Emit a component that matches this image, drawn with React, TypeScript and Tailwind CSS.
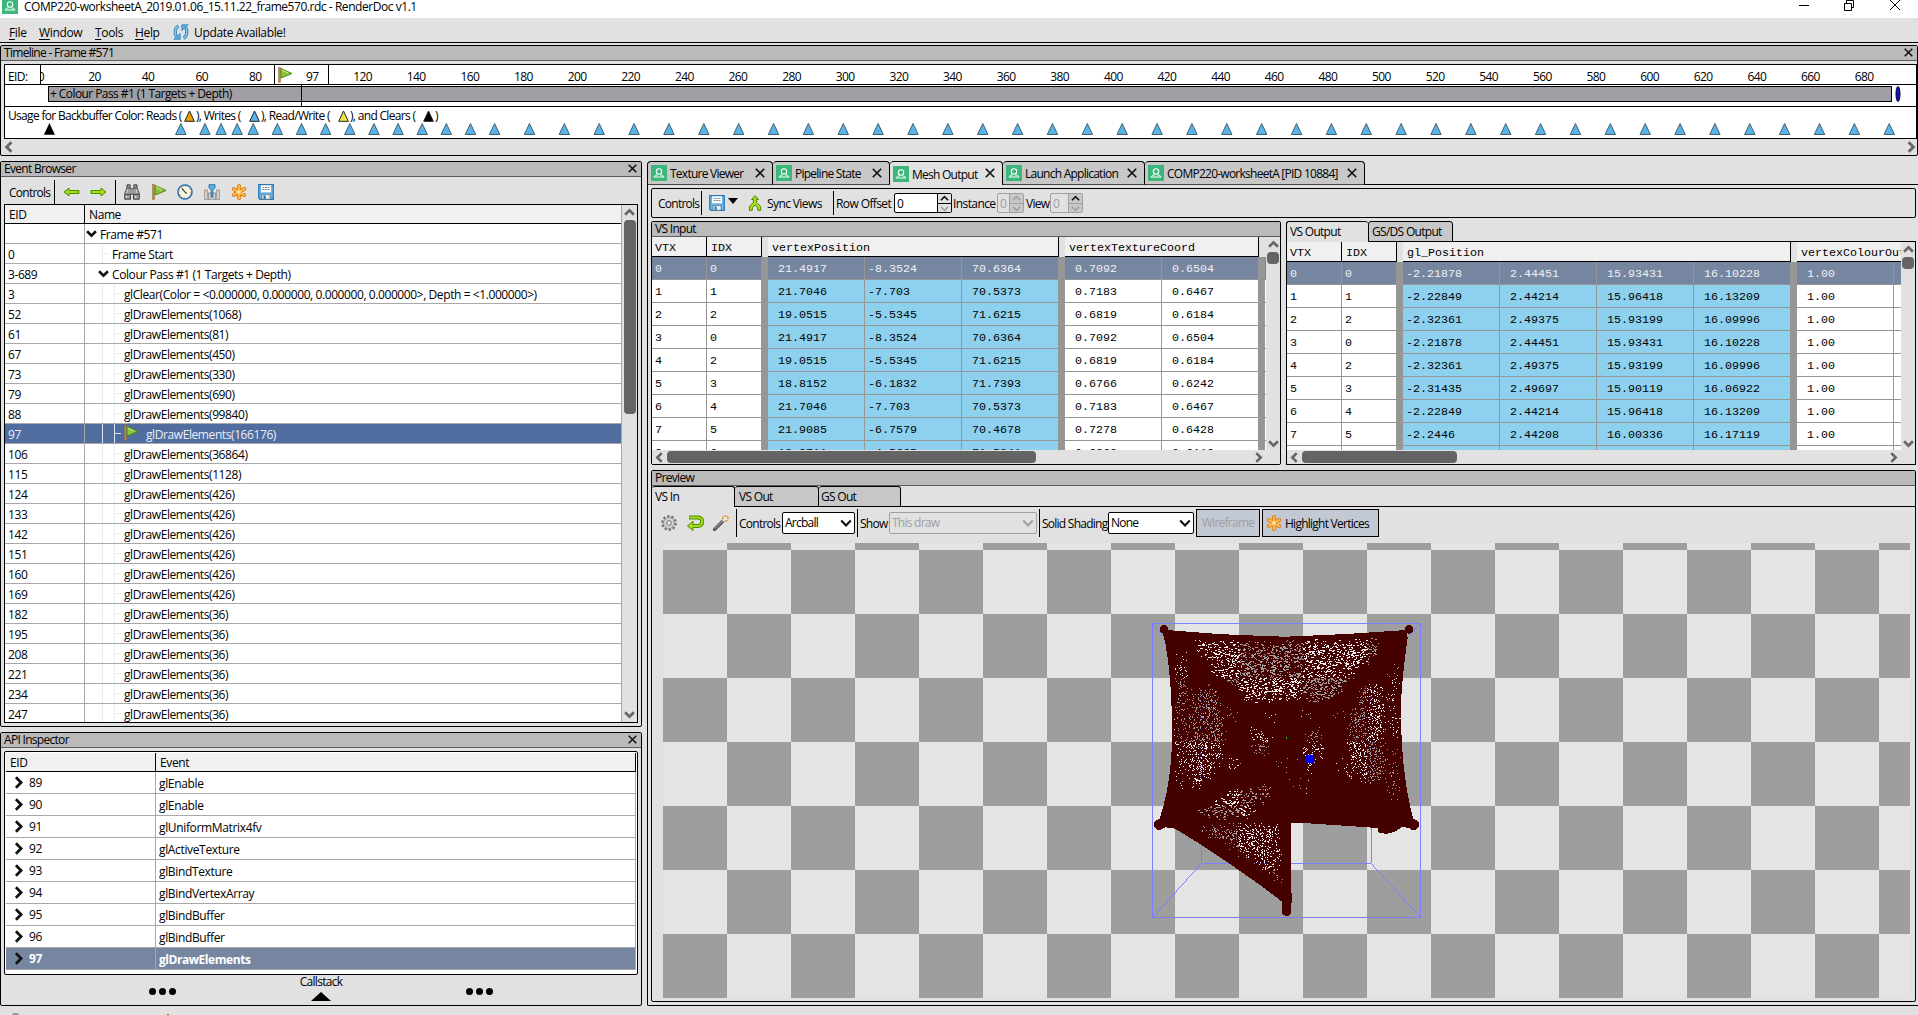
import type { ReactNode } from "react";

/* ---------- icons ---------- */

function Logo() {
  return (
    <svg width="16" height="16" viewBox="0 0 16 16" className="shrink-0">
      <rect width="16" height="16" fill="#3bb77a" />
      <circle cx="8" cy="6.500" r="2.700" fill="none" stroke="#fff" strokeWidth="1.100" />
      <path d="M3 12c.8-1.800 2.500-2 3.800-2.100M13 12c-.8-1.800-2.500-2-3.800-2.100M3 12h10" fill="none" stroke="#fff" strokeWidth="1" />
    </svg>
  );
}

function Flag() {
  return (
    <svg width="15" height="16" viewBox="0 0 15 16" className="shrink-0">
      <rect x="0.500" y="0.500" width="2" height="15" fill="#b98a4a" stroke="#8d6b3c" strokeWidth=".5" />
      <path d="M3 1.500L14 6.500L3 11z" fill="#8cc63a" stroke="#4f8a10" strokeWidth="1" />
      <path d="M4 3l6 3" stroke="#c8ee80" strokeWidth="1" />
    </svg>
  );
}

function Arrow({ flip = false }: { flip?: boolean }) {
  return (
    <svg width="17" height="16" viewBox="0 0 17 16" className={flip ? "shrink-0 -scale-x-100" : "shrink-0"}>
      <path d="M1 8l5-4v2.500h10v3H6V12z" fill="#a5dc1c" stroke="#4c8a00" strokeWidth="1" strokeLinejoin="round" />
    </svg>
  );
}

function Binoculars() {
  return (
    <svg width="16" height="16" viewBox="0 0 16 16" className="shrink-0">
      <path
        d="M3 .8h3.200v3L7 5h2l.8-1.200v-3H13v3l2.300 6v5.400H9.500V10h-3v5.200H.7V9.800l2.300-6z"
        fill="#9c9c9c"
        stroke="#444"
        strokeWidth="1"
      />
      <path d="M1 10.500h5.500M9.500 10.500H15M3 4h3M10 4h3" stroke="#444" />
      <path d="M2.500 9l1.200-4M12.300 5l1 4M2.500 12v2M11.500 12v2" stroke="#ddd" />
    </svg>
  );
}

function Clock() {
  return (
    <svg width="16" height="16" viewBox="0 0 16 16" className="shrink-0">
      <circle cx="8" cy="8" r="7" fill="#fbf6dc" stroke="#2b6fae" strokeWidth="1.600" />
      <circle cx="8" cy="8" r="5.300" fill="none" stroke="#9a9a8a" strokeWidth="1" strokeDasharray="1 3.160" />
      <path d="M5 4.500L8.200 8.300L10 9.500" fill="none" stroke="#444" strokeWidth="1.200" />
    </svg>
  );
}

function Counters() {
  return (
    <svg width="16" height="16" viewBox="0 0 16 16" className="shrink-0">
      <g fill="#d6d6d6" stroke="#8a8a8a" strokeWidth=".8">
        <rect x=".7" y="6" width="2.600" height="9.500" />
        <rect x="4.500" y="9" width="2.600" height="6.500" />
        <rect x="9" y="9" width="2.600" height="6.500" />
        <rect x="12.700" y="6" width="2.600" height="9.500" />
      </g>
      <path d="M5 .7h6v3L8.700 6.300V13H7.300V6.300L5 3.700z" fill="#5aaee6" stroke="#2b6fae" strokeWidth=".9" />
    </svg>
  );
}

function Star() {
  return (
    <svg width="16" height="16" viewBox="0 0 16 16" className="shrink-0">
      <g strokeLinecap="round">
        <path d="M8 2v12M2.800 5l10.400 6M13.200 5L2.800 11" stroke="#d97c10" strokeWidth="4" />
        <path d="M8 2v12M2.800 5l10.400 6M13.200 5L2.800 11" stroke="#fdb64a" strokeWidth="2.400" />
      </g>
      <path d="M8 6v4M6 7l4 2M10 7L6 9" stroke="#ffe1a0" />
    </svg>
  );
}

function Save() {
  return (
    <svg width="16" height="16" viewBox="0 0 16 16" className="shrink-0">
      <path d="M.7.7h14.600v14.600H2L.7 14z" fill="#62b5ea" stroke="#2b78b4" strokeWidth="1.200" />
      <rect x="3" y="1.300" width="10" height="7" fill="#fff" />
      <path d="M4.500 3.500h7M4.500 5.500h7" stroke="#888" strokeDasharray="2 .6" />
      <rect x="4" y="10.500" width="8" height="4.700" fill="#e8eef2" stroke="#666" strokeWidth=".6" />
      <rect x="5.500" y="11.500" width="2.200" height="3.500" fill="#2b78b4" />
    </svg>
  );
}

function Refresh() {
  return (
    <svg width="16" height="16" viewBox="0 0 16 16" className="shrink-0">
      <g fill="none" stroke="#2f7fc0" strokeWidth="3.200">
        <path d="M5.500 1.800C1.500 4 1.500 9.500 3.500 13" />
        <path d="M10.500 14.200C14.500 12 14.500 6.500 12.500 3" />
      </g>
      <g fill="none" stroke="#8cc8f0" strokeWidth="1.400">
        <path d="M5.500 1.800C1.500 4 1.500 9.500 3.500 13" />
        <path d="M10.500 14.200C14.500 12 14.500 6.500 12.500 3" />
      </g>
      <path d="M.8 15.200h6.400V9.500zM15.200.8H8.800v5.700z" fill="#5faee2" stroke="#2f7fc0" strokeWidth=".8" />
    </svg>
  );
}

function Sync() {
  return (
    <svg width="14" height="16" viewBox="0 0 14 16" className="shrink-0">
      <path
        d="M7 .7L10.500 4.500H8.500L8.700 7.500L12.600 11.500V15.300H9.700V12.800L7 10L4.300 12.800V15.300H1.400V11.500L5.300 7.500L5.500 4.500H3.500z"
        fill="#a5dc1c"
        stroke="#4c8a00"
        strokeWidth="1"
        strokeLinejoin="round"
      />
    </svg>
  );
}

function Gear() {
  return (
    <svg width="16" height="16" viewBox="0 0 16 16" className="shrink-0">
      <circle cx="8" cy="8" r="6.600" fill="none" stroke="#777" strokeWidth="2.600" strokeDasharray="2.400 1.750" />
      <circle cx="8" cy="8" r="5.500" fill="#d2d2d2" stroke="#888" strokeWidth=".8" />
      <circle cx="8" cy="8" r="2.400" fill="#e1e1e1" stroke="#777" />
    </svg>
  );
}

function Reset() {
  return (
    <svg width="17" height="16" viewBox="0 0 17 16" className="shrink-0">
      <path d="M2 2.500H11a4.200 4.200 0 0 1 0 8.500H5" fill="none" stroke="#4c8a00" strokeWidth="4" />
      <path d="M.5 11L6 6.200V15.500z" fill="#a5dc1c" stroke="#4c8a00" />
      <path d="M2.500 2.500H11a4.200 4.200 0 0 1 0 8.500H4.500" fill="none" stroke="#a5dc1c" strokeWidth="2.200" />
    </svg>
  );
}

function Wand() {
  return (
    <svg width="16" height="16" viewBox="0 0 16 16" className="shrink-0">
      <path d="M1.500 14.500L10.500 5.500" stroke="#555" strokeWidth="3.200" strokeLinecap="round" />
      <path d="M2 13.500L10 5.500" stroke="#aab4c0" strokeWidth="1" />
      <path d="M10 6L12.500 3.500" stroke="#eee" strokeWidth="3" />
      <path d="M12.500 0v2M12.500 5v2M9 3.200h2M14 3.200h2M10 1l1 1M15 1l-1 1M15 6l-1-1" stroke="#f59a23" strokeWidth="1.500" />
    </svg>
  );
}

function Cross({ size = 9 }: { size?: number }) {
  return (
    <svg width={size} height={size} viewBox="0 0 9 9" className="shrink-0">
      <path d="M.7.7l7.600 7.600M8.300.7L.7 8.300" stroke="#111" strokeWidth="1.500" />
    </svg>
  );
}

type Dir = "up" | "down" | "left" | "right";
const chevronPath: Record<Dir, string> = {
  up: "M1 7l4-4 4 4",
  down: "M1 3l4 4 4-4",
  left: "M7 1L3 5l4 4",
  right: "M3 1l4 4-4 4",
};

function Chevron({ dir, color = "#666", size = 11, weight = 2.4 }: { dir: Dir; color?: string; size?: number; weight?: number }) {
  return (
    <svg width={size} height={size} viewBox="0 0 10 10" className="shrink-0">
      <path d={chevronPath[dir]} fill="none" stroke={color} strokeWidth={weight} />
    </svg>
  );
}

function Marker({ fill }: { fill: string }) {
  return (
    <svg width="11" height="12" viewBox="0 0 11 12" className="shrink-0">
      <path d="M5.500 1L10.300 11.300H.7z" fill={fill} stroke="#222" strokeWidth="1" />
    </svg>
  );
}

/* ---------- shared pieces ---------- */

function PanelTitle({ children, closable = false }: { children: ReactNode; closable?: boolean }) {
  return (
    <div className="flex h-[15px] shrink-0 items-center justify-between border-b border-[#5c5c5c] bg-[#bababa] pr-1 pl-[3px] tracking-[-0.7px]">
      <span>{children}</span>
      {closable && (
        <span className="-mt-0.5">
          <Cross />
        </span>
      )}
    </div>
  );
}

function Sep({ className = "" }: { className?: string }) {
  return <div className={"w-px shrink-0 bg-black " + className} />;
}

/* ---------- timeline ---------- */

const drawEvents = [52, 61, 67, 73, 79, 88, 97, 106, 115, 124, 133, 142, 151, 160, 169];
for (let e = 182; e <= 689; e += 13) drawEvents.push(e);

const eventX = (eid: number) => 44.4 + (eid - 3) * 2.682;

function Timeline() {
  const ticks = Array.from({ length: 35 }, (_, i) => i * 20);
  return (
    <section className="mt-0.5 flex h-[111px] shrink-0 flex-col rounded-[2px] border border-black">
      <PanelTitle closable>Timeline - Frame #571</PanelTitle>
      <div className="mt-[3px] ml-[3px] flex h-[75px] flex-col border border-black bg-white">
        <div className="relative flex h-5 border-b border-black tracking-[-0.6px]">
          <div className="w-9 shrink-0 border-r border-black pl-[3px] leading-[23px]">EID:</div>
          <div className="flex overflow-hidden">
            <div className="-ml-[27px] flex">
              {ticks.map((t) => (
                <div key={t} className="w-[53.630px] shrink-0 text-center leading-[23px]">
                  {t === 100 ? "" : t}
                </div>
              ))}
            </div>
          </div>
          <div className="absolute top-0 left-[269px] flex h-[19px] w-[55px] items-center border-x border-black bg-white pl-[3px]">
            <Flag />
            <span className="ml-[13px] pt-[4px]">97</span>
          </div>
        </div>
        <div className="flex h-[22px] border-b border-black pt-px pl-[43px]">
          <div className="flex h-4 w-[1844px] items-center border border-black bg-[#a09fa4]">
            <span className="w-[252px] pl-px tracking-[-0.58px]">+ Colour Pass #1 (1 Targets + Depth)</span>
            <div className="h-[21px] w-px translate-y-px bg-black" />
          </div>
          <svg width="6" height="16" className="ml-[3px]">
            <ellipse cx="3" cy="8" rx="2" ry="7.500" fill="#1414b8" stroke="#000033" />
          </svg>
        </div>
        <div className="h-[31px]">
          <div className="flex h-4 items-center pt-px pl-[3px] tracking-[-0.68px] whitespace-nowrap">
            <span className="w-[176px]">Usage for Backbuffer Color: Reads (</span>
            <Marker fill="#e69f00" />
            <span className="w-[54px] pl-px">), Writes (</span>
            <Marker fill="#56b4e9" />
            <span className="w-[78px] pl-px">), Read/Write (</span>
            <Marker fill="#f0e442" />
            <span className="w-[74px] pl-px">), and Clears (</span>
            <Marker fill="#000" />
            <span className="pl-px">)</span>
          </div>
          <svg width="1911" height="15" className="block">
            <path d={`M${eventX(3)} 0l5.500 11.800h-11z`} />
            {drawEvents.map((e) => (
              <path key={e} d={`M${eventX(e)} .5l5.200 11h-10.400z`} fill="#56b4e9" stroke="#46606e" strokeWidth="1" />
            ))}
          </svg>
        </div>
      </div>
      <div className="flex h-4 items-center justify-between pl-[2px]">
        <Chevron dir="left" size={12} />
        <Chevron dir="right" size={12} />
      </div>
    </section>
  );
}

/* ---------- event browser ---------- */

const events: [string, string, number][] = [
  ["", "Frame #571", 0],
  ["0", "Frame Start", 1],
  ["3-689", "Colour Pass #1 (1 Targets + Depth)", 1],
  ["3", "glClear(Color = <0.000000, 0.000000, 0.000000, 0.000000>, Depth = <1.000000>)", 2],
  ["52", "glDrawElements(1068)", 2],
  ["61", "glDrawElements(81)", 2],
  ["67", "glDrawElements(450)", 2],
  ["73", "glDrawElements(330)", 2],
  ["79", "glDrawElements(690)", 2],
  ["88", "glDrawElements(99840)", 2],
  ["97", "glDrawElements(166176)", 2],
  ["106", "glDrawElements(36864)", 2],
  ["115", "glDrawElements(1128)", 2],
  ["124", "glDrawElements(426)", 2],
  ["133", "glDrawElements(426)", 2],
  ["142", "glDrawElements(426)", 2],
  ["151", "glDrawElements(426)", 2],
  ["160", "glDrawElements(426)", 2],
  ["169", "glDrawElements(426)", 2],
  ["182", "glDrawElements(36)", 2],
  ["195", "glDrawElements(36)", 2],
  ["208", "glDrawElements(36)", 2],
  ["221", "glDrawElements(36)", 2],
  ["234", "glDrawElements(36)", 2],
  ["247", "glDrawElements(36)", 2],
];

function EventRow({ eid, name, depth }: { eid: string; name: string; depth: number }) {
  const selected = eid === "97";
  const line = selected ? "border-[#dfe5f0]" : "border-[#ececec]";
  const bg = selected ? "bg-[#516da0] text-[#e8edf5]" : "bg-white";
  return (
    <div className={"flex h-5 shrink-0 border-b border-[#a8a8a8] leading-[22px] " + bg}>
      <div className="w-20 shrink-0 border-r border-[#a8a8a8] pl-[3px]">{eid}</div>
      {depth === 0 && (
        <div className="flex items-center pl-[1px]">
          <Chevron dir="down" color="#111" />
          <span className="ml-[3px] pt-[2px]">{name}</span>
        </div>
      )}
      {depth === 1 && name === "Frame Start" && (
        <div className="flex pl-[17px]">
          <div className={"w-[10px] border-l " + line}>
            <div className={"h-[10px] w-[6px] border-b " + line} />
          </div>
          <span>{name}</span>
        </div>
      )}
      {depth === 1 && name !== "Frame Start" && (
        <div className="flex items-center pl-[13px]">
          <Chevron dir="down" color="#111" />
          <span className="ml-[3px] pt-[2px]">{name}</span>
        </div>
      )}
      {depth === 2 && (
        <div className="flex pl-[17px]">
          <div className={"w-3 border-l " + line} />
          <div className={"w-[10px] border-l " + line}>
            <div className={"h-[10px] w-[6px] border-b " + line} />
          </div>
          {selected && (
            <span className="mr-[7px] pt-px">
              <Flag />
            </span>
          )}
          <span>{name}</span>
        </div>
      )}
    </div>
  );
}

function EventBrowser() {
  return (
    <section className="flex h-[566px] shrink-0 flex-col rounded-[2px] border border-black">
      <PanelTitle closable>Event Browser</PanelTitle>
      <div className="flex h-[27px] shrink-0 items-center pt-[3px] pl-2">
        <span className="w-[45px] pt-px tracking-[-0.75px]">Controls</span>
        <Sep className="mr-2 h-6" />
        <Arrow />
        <span className="ml-[10px]">
          <Arrow flip />
        </span>
        <Sep className="mr-2 ml-2 h-6" />
        <Binoculars />
        <span className="w-3" />
        <Flag />
        <span className="w-[10px]" />
        <Clock />
        <span className="w-[11px]" />
        <Counters />
        <span className="w-[11px]" />
        <Star />
        <span className="w-[11px]" />
        <Save />
      </div>
      <div className="mx-[3px] flex h-[519px] border border-black bg-white tracking-[-0.41px]">
        <div className="flex flex-1 flex-col overflow-hidden border-r border-[#a8a8a8]">
          <div className="flex h-[19px] shrink-0 border-b border-black bg-[#f0f0f0] leading-5">
            <div className="w-20 border-r border-black pl-1">EID</div>
            <div className="pl-1">Name</div>
          </div>
          {events.map(([eid, name, depth]) => (
            <EventRow key={eid + name} eid={eid} name={name} depth={depth} />
          ))}
        </div>
        <div className="flex w-[15px] flex-col items-center bg-[#e1e1e1] py-[2px]">
          <Chevron dir="up" />
          <div className="mt-[2px] h-[194px] w-3 rounded-[4px] bg-[#646464]" />
          <div className="mt-auto">
            <Chevron dir="down" />
          </div>
        </div>
      </div>
    </section>
  );
}

/* ---------- API inspector ---------- */

const apiCalls: [string, string][] = [
  ["89", "glEnable"],
  ["90", "glEnable"],
  ["91", "glUniformMatrix4fv"],
  ["92", "glActiveTexture"],
  ["93", "glBindTexture"],
  ["94", "glBindVertexArray"],
  ["95", "glBindBuffer"],
  ["96", "glBindBuffer"],
  ["97", "glDrawElements"],
];

function Dots() {
  return (
    <div className="flex gap-[3px]">
      <div className="size-[7px] rounded-full bg-black" />
      <div className="size-[7px] rounded-full bg-black" />
      <div className="size-[7px] rounded-full bg-black" />
    </div>
  );
}

function ApiInspector() {
  return (
    <section className="mt-[5px] flex h-[274px] shrink-0 flex-col rounded-[2px] border border-black">
      <PanelTitle closable>API Inspector</PanelTitle>
      <div className="mx-[3px] mt-[3px] h-[224px] rounded-[2px] border border-black bg-white p-px">
        <div className="flex h-[19px] border-r border-b border-black bg-[#f0f0f0] leading-5">
          <div className="w-[150px] border-r border-black pl-1">EID</div>
          <div className="pl-1">Event</div>
        </div>
        {apiCalls.map(([eid, name]) => {
          const selected = eid === "97";
          return (
            <div
              key={eid}
              className={
                "flex h-[22px] border-r border-b border-[#a8a8a8] leading-6 " +
                (selected ? "bg-[#7786a0] font-bold tracking-[-0.45px] text-white" : "bg-white")
              }
            >
              <div className="flex w-[150px] items-center border-r border-[#a8a8a8] pl-[6px]">
                <Chevron dir="right" color="#111" size={13} weight={2.1} />
                <span className="ml-1 pt-px">{eid}</span>
              </div>
              <div className="pl-[3px]">{name}</div>
            </div>
          );
        })}
      </div>
      <div className="flex h-[30px] items-start justify-center">
        <div className="mt-[13px]">
          <Dots />
        </div>
        <div className="mx-[117px] flex w-[56px] flex-col items-center leading-[15px] tracking-[-0.7px]">
          <span className="-mt-px">Callstack</span>
          <svg width="20" height="9" className="mt-[3px]">
            <path d="M10 0L20 9H0z" />
          </svg>
        </div>
        <div className="mt-[13px]">
          <Dots />
        </div>
      </div>
    </section>
  );
}

/* ---------- mesh data tables ---------- */

interface Column {
  title: string;
  highlight: boolean;
  count: number;
}

const inputRows: string[][] = [
  ["0", "0", " 21.4917", "-8.3524", " 70.6364", " 0.7092", " 0.6504"],
  ["1", "1", " 21.7046", "-7.703", " 70.5373", " 0.7183", " 0.6467"],
  ["2", "2", " 19.0515", "-5.5345", " 71.6215", " 0.6819", " 0.6184"],
  ["3", "0", " 21.4917", "-8.3524", " 70.6364", " 0.7092", " 0.6504"],
  ["4", "2", " 19.0515", "-5.5345", " 71.6215", " 0.6819", " 0.6184"],
  ["5", "3", " 18.8152", "-6.1832", " 71.7393", " 0.6766", " 0.6242"],
  ["6", "4", " 21.7046", "-7.703", " 70.5373", " 0.7183", " 0.6467"],
  ["7", "5", " 21.9085", "-6.7579", " 70.4678", " 0.7278", " 0.6428"],
  ["8", "6", " 19.2711", "-4.5665", " 71.5041", " 0.6868", " 0.6119"],
];

const outputRows: string[][] = [
  ["0", "0", "-2.21878", " 2.44451", " 15.93431", " 16.10228", " 1.00"],
  ["1", "1", "-2.22849", " 2.44214", " 15.96418", " 16.13209", " 1.00"],
  ["2", "2", "-2.32361", " 2.49375", " 15.93199", " 16.09996", " 1.00"],
  ["3", "0", "-2.21878", " 2.44451", " 15.93431", " 16.10228", " 1.00"],
  ["4", "2", "-2.32361", " 2.49375", " 15.93199", " 16.09996", " 1.00"],
  ["5", "3", "-2.31435", " 2.49697", " 15.90119", " 16.06922", " 1.00"],
  ["6", "4", "-2.22849", " 2.44214", " 15.96418", " 16.13209", " 1.00"],
  ["7", "5", "-2.2446", " 2.44208", " 16.00336", " 16.17119", " 1.00"],
  ["", "", "", "", "", "", ""],
];

function MeshTable({ columns, rows }: { columns: Column[]; rows: string[][] }) {
  return (
    <div className="flex w-[614px] shrink-0 flex-col overflow-hidden bg-white font-['Liberation_Mono',monospace] text-[11.67px] tracking-normal">
      <div className="flex h-5 shrink-0 bg-[#e1e1e1] leading-[23px]">
        <div className="w-[55px] shrink-0 border-r border-b border-black bg-[#f0f0f0] pl-[3px]">VTX</div>
        <div className="w-[55px] shrink-0 border-r border-b border-black bg-[#f0f0f0] pl-[4px]">IDX</div>
        {columns.map((c) => (
          <div
            key={c.title}
            className={
              "ml-[6px] shrink-0 overflow-hidden border-r border-b border-black bg-[#f0f0f0] pl-1 " +
              (c.count === 4 ? "w-[388px]" : c.count === 3 ? "w-[291px]" : c.count === 2 ? "w-[194px]" : "w-[105px]")
            }
          >
            {c.title}
          </div>
        ))}
      </div>
      {rows.map((row, r) => {
        const selected = r === 0;
        const plain = selected ? "bg-[#7786a0] text-[#eef1f6]" : "bg-white";
        let next = 2;
        return (
          <div key={r} className="flex h-[23px] shrink-0 leading-[25px] whitespace-pre">
            <div className={"w-[55px] shrink-0 border-r border-b border-[#969696] pl-[3px] " + plain}>{row[0]}</div>
            <div className={"w-[55px] shrink-0 border-r border-b border-[#969696] pl-[3px] " + plain}>{row[1]}</div>
            {columns.map((c) => {
              const cells = row.slice(next, next + c.count);
              next += c.count;
              return (
                <div key={c.title} className="flex shrink-0 border-l-[6px] border-[#969696]">
                  {cells.map((v, i) => (
                    <div
                      key={i}
                      className={
                        "w-[97px] border-r border-b border-[#969696] pl-[3px] " +
                        (!selected && c.highlight ? "bg-[#8dd1ef]" : plain)
                      }
                    >
                      {v}
                    </div>
                  ))}
                </div>
              );
            })}
            <div className={"flex-1 border-b border-[#969696] " + (columns[1].count === 2 ? "border-l-[6px] " : "") + plain} />
          </div>
        );
      })}
    </div>
  );
}

function VScroll() {
  return (
    <div className="flex w-[14px] flex-col items-center bg-[#e1e1e1] pt-[2px] pb-[1px]">
      <Chevron dir="up" />
      <div className="mt-[2px] h-3 w-3 rounded-[4px] bg-[#646464]" />
      <div className="mt-auto">
        <Chevron dir="down" />
      </div>
    </div>
  );
}

function HScroll({ thumb }: { thumb: string }) {
  return (
    <div className="flex h-[14px] shrink-0 items-center bg-[#e1e1e1] pr-[16px] pl-[2px]">
      <Chevron dir="left" />
      <div className={"ml-[2px] h-3 rounded-[4px] bg-[#646464] " + thumb} />
      <div className="ml-auto">
        <Chevron dir="right" />
      </div>
    </div>
  );
}

function VsInput() {
  return (
    <section className="flex w-[630px] flex-col rounded-[2px] border border-black">
      <PanelTitle>VS Input</PanelTitle>
      <div className="flex h-[213px]">
        <MeshTable
          rows={inputRows}
          columns={[
            { title: "vertexPosition", highlight: true, count: 3 },
            { title: "vertexTextureCoord", highlight: false, count: 2 },
          ]}
        />
        <VScroll />
      </div>
      <HScroll thumb="w-[369px]" />
    </section>
  );
}

function VsOutput() {
  return (
    <section className="ml-[5px] flex w-[630px] flex-col">
      <div className="flex h-[21px] shrink-0 leading-[20px] tracking-[-0.7px]">
        <div className="w-[82px] rounded-t-[3px] border-t border-l border-black pl-[3px]">VS Output</div>
        <div className="w-[85px] rounded-t-[3px] border border-black bg-[#c8c8c8] pl-[3px]">GS/DS Output</div>
        <div className="flex-1 border-b border-black" />
      </div>
      <div className="flex flex-1 flex-col border-x border-b border-black">
        <div className="flex h-[208px]">
          <MeshTable
            rows={outputRows}
            columns={[
              { title: "gl_Position", highlight: true, count: 4 },
              { title: "vertexColourOut", highlight: false, count: 1 },
            ]}
          />
          <VScroll />
        </div>
        <HScroll thumb="w-[155px]" />
      </div>
    </section>
  );
}

/* ---------- preview viewport ---------- */

type Pt = [number, number];

function inside(poly: Pt[], x: number, y: number) {
  let hit = false;
  for (let i = 0, j = poly.length - 1; i < poly.length; j = i++) {
    const [xi, yi] = poly[i];
    const [xj, yj] = poly[j];
    if (yi > y !== yj > y && x < ((xj - xi) * (y - yi)) / (yj - yi) + xi) hit = !hit;
  }
  return hit;
}

/* Areas of the vertex cloud where the background shows through, with how often it does. */
const sparseAreas: { d: number; dash?: boolean; pts: Pt[] }[] = [
  { d: 0.25, dash: true, pts: [[190, 130], [755, 125], [650, 240], [600, 295], [350, 295], [250, 205]] },
  { d: 0.15, pts: [[137, 150], [158, 160], [175, 300], [180, 420], [150, 560], [138, 560]] },
  { d: 0.25, pts: [[190, 270], [255, 260], [285, 400], [265, 490], [200, 570], [168, 500], [185, 400]] },
  { d: 0.24, pts: [[365, 385], [400, 390], [420, 430], [400, 465], [370, 450]] },
  { d: 0.2, pts: [[530, 400], [560, 385], [578, 460], [540, 510], [520, 450]] },
  { d: 0.25, pts: [[690, 265], [755, 250], [762, 535], [700, 550], [655, 450], [660, 380]] },
  { d: 0.1, pts: [[780, 210], [810, 170], [800, 420], [808, 600], [775, 590]] },
  { d: 0.16, pts: [[290, 480], [320, 470], [325, 495], [305, 515]] },
  { d: 0.14, pts: [[285, 330], [330, 330], [330, 360], [290, 350]] },
  { d: 0.1, pts: [[380, 335], [420, 335], [450, 365], [430, 365]] },
  { d: 0.12, pts: [[490, 365], [515, 335], [555, 340], [520, 355]] },
  { d: 0.12, pts: [[610, 335], [650, 330], [650, 360], [610, 360]] },
  { d: 0.1, pts: [[610, 475], [660, 480], [690, 540], [640, 540]] },
  { d: 0.02, pts: [[390, 470], [550, 465], [545, 610], [430, 515]] },
  { d: 0.26, dash: true, pts: [[200, 645], [300, 575], [430, 560], [345, 650]] },
  { d: 0.27, pts: [[205, 680], [440, 675], [445, 840], [310, 740]] },
];

function random(seed: number) {
  let s = seed;
  return () => {
    s = (s * 1664525 + 1013904223) % 4294967296;
    return s / 4294967296;
  };
}

function buildHoles() {
  const rnd = random(97);
  let light = "";
  let dark = "";
  for (let y = 114; y < 870; y += 3) {
    for (let x = 132; x < 822; x += 3) {
      const jx = x + (rnd() - 0.5) * 26;
      const jy = y + (rnd() - 0.5) * 26;
      const area = sparseAreas.find((a) => inside(a.pts, jx, jy));
      const roll = rnd();
      if (!area || roll > area.d * 0.8) continue;
      const w = area.dash && rnd() > 0.6 ? 6 : 3;
      const even = (Math.floor((x + 57) / 192) + Math.floor((y + 150) / 192)) % 2 === 0;
      const cell = `M${x} ${y}h${w}v3h-${w}z`;
      if (even) light += cell;
      else dark += cell;
    }
  }
  return { light, dark };
}

const holes = buildHoles();

function Viewport() {
  return (
    <div className="ml-[11px] h-[455px] w-[1247px] bg-[repeating-conic-gradient(#e4e4e4_0_25%,#9e9e9e_0_50%)] bg-[length:128px_128px] bg-[position:0_7px]">
      <svg width="1247" height="455" className="block" shapeRendering="crispEdges">
        <g transform="translate(467 57) scale(.33333)">
          <g fill="none" stroke="#7d7dff" strokeWidth="3">
            <rect x="68.500" y="70.500" width="803" height="882" />
            <path d="M214.500 700V790.500H724.500V680M68 952L214 791M871 952L724 791M68 71L108 115M871 71L840 105" />
          </g>
          <g fill="#450000">
            <path d="M110 90Q290 107 470 110Q650 104 830 90L833 115Q812 260 813 340Q814 520 848 650L862 684L840 683L815 682L795 695L768 702L745 697L743 684L520 669L483 669V870L486 885L483 935Q482 947 470 948Q458 947 456 936V905L390 855L300 792L210 732L135 686L107 682L90 688L88 660Q127 540 126 400Q126 240 106 130L98 98z" />
            <circle cx="102" cy="88" r="13" />
            <circle cx="837" cy="88" r="13" />
            <circle cx="88" cy="674" r="16" />
            <circle cx="851" cy="674" r="16" />
          </g>
          <path d={holes.light} fill="#f0eeee" />
          <path d={holes.dark} fill="#9e9e9e" />
          <path
            d="M213 270v120M213 440v90M723 270v120M723 425v100M372 790h60"
            fill="none"
            stroke="#7d7dff"
            strokeWidth="3"
            strokeDasharray="3 15 3 9 3 24"
          />
          <rect x="527" y="465" width="24" height="24" fill="#0000ff" />
          <rect x="468" y="411" width="3" height="6" fill="#00e000" />
        </g>
      </svg>
    </div>
  );
}

function Select({ value, width, disabled = false }: { value: string; width: string; disabled?: boolean }) {
  return (
    <div
      className={
        "flex h-[22px] shrink-0 items-center justify-between rounded-[2px] border pr-[2px] pl-[2px] " +
        width +
        (disabled ? " border-[#a0a0a0] text-[#a0a0a0]" : " border-black bg-white")
      }
    >
      <span>{value}</span>
      <Chevron dir="down" color={disabled ? "#a0a0a0" : "#111"} size={12} weight={1.8} />
    </div>
  );
}

function Preview() {
  return (
    <section className="mt-[5px] flex h-[532px] w-[1265px] shrink-0 flex-col rounded-[2px] border border-black">
      <PanelTitle>Preview</PanelTitle>
      <div className="flex h-[21px] shrink-0 leading-[20px] tracking-[-0.7px]">
        <div className="w-[83px] rounded-t-[3px] border-t border-r border-black pl-[3px]">VS In</div>
        <div className="w-[84px] rounded-t-[3px] border-t border-r border-b border-black bg-[#c8c8c8] pl-1">VS Out</div>
        <div className="w-[82px] rounded-t-[3px] border-t border-r border-b border-black bg-[#c8c8c8] pl-[2px]">GS Out</div>
        <div className="flex-1 border-b border-black" />
      </div>
      <div className="flex h-9 shrink-0 items-center pb-[4px] pl-[9px] tracking-[-0.75px] whitespace-nowrap">
        <Gear />
        <span className="w-[10px]" />
        <Reset />
        <span className="w-[9px]" />
        <Wand />
        <Sep className="ml-[7px] h-7" />
        <span className="w-[45px] pt-px pl-[2px]">Controls</span>
        <Select value="Arcball" width="w-[73px]" />
        <Sep className="ml-[2px] h-7" />
        <span className="w-[31px] pt-px pl-[2px]">Show</span>
        <Select value="This draw" width="w-[148px]" disabled />
        <Sep className="ml-[2px] h-7" />
        <span className="w-[68px] pt-px pl-[2px]">Solid Shading</span>
        <Select value="None" width="w-[86px]" />
        <div className="ml-[2px] flex h-7 w-[64px] items-center justify-center border border-black bg-[#c3c9d4] text-[#a0a0a0]">
          Wireframe
        </div>
        <div className="ml-[2px] flex h-7 w-[117px] items-center border border-black bg-[#c3c9d4] pl-[3px]">
          <Star />
          <span className="ml-[3px] pt-px">Highlight Vertices</span>
        </div>
      </div>
      <Viewport />
    </section>
  );
}

/* ---------- mesh output workspace ---------- */

const tabs: { title: string; width: string; active?: boolean }[] = [
  { title: "Texture Viewer", width: "w-[126px]" },
  { title: "Pipeline State", width: "w-[117px]" },
  { title: "Mesh Output", width: "w-[113px]", active: true },
  { title: "Launch Application", width: "w-[142px]" },
  { title: "COMP220-worksheetA [PID 10884]", width: "w-[220px]" },
];

function Spinner({ width, state }: { width: string; state: "on" | "off" | "half" }) {
  const on = state === "on";
  return (
    <div
      className={
        "flex h-5 shrink-0 rounded-[2px] border " + width + (on ? " border-black bg-white" : " border-[#a0a0a0] text-[#a0a0a0]")
      }
    >
      <span className="flex-1 pl-[2px] leading-5">0</span>
      <div
        className={
          "flex w-[14px] flex-col items-center justify-around border-l " +
          (on ? "border-black bg-[#e1e1e1]" : "border-[#a0a0a0] bg-[#c8c8c8]")
        }
      >
        <Chevron dir="up" color={state === "off" ? "#a0a0a0" : "#111"} size={9} weight={1.8} />
        <div className={"h-px w-full shrink-0 " + (on ? "bg-black" : "bg-[#a0a0a0]")} />
        <Chevron dir="down" color="#a0a0a0" size={9} weight={1.8} />
      </div>
    </div>
  );
}

function Workspace() {
  return (
    <div className="ml-[5px] flex w-[1271px] shrink-0 flex-col">
      <div className="flex h-6 shrink-0 tracking-[-0.75px]">
        {tabs.map((t, i) => (
          <div
            key={t.title}
            className={
              "flex shrink-0 items-center rounded-t-[4px] border-t border-r border-black pr-[7px] pl-[3px] whitespace-nowrap " +
              t.width +
              (i === 0 ? " border-l" : "") +
              (t.active ? "" : " border-b border-b-[#444] bg-[#c8c8c8]")
            }
          >
            <Logo />
            <span className="ml-[3px] pt-[2px]">{t.title}</span>
            <span className="-mt-[1px] ml-auto">
              <Cross size={10} />
            </span>
          </div>
        ))}
        <div className="flex-1 border-b border-black" />
      </div>
      <div className="flex flex-1 flex-col rounded-bl-[2px] border-b border-l border-black pt-[3px] pl-[3px]">
        <div className="flex h-[30px] w-[1265px] shrink-0 items-center rounded-[2px] border border-black pl-[6px] tracking-[-0.75px] whitespace-nowrap">
          <span className="w-[43px] pt-[2px]">Controls</span>
          <Sep className="h-6" />
          <span className="w-[7px]" />
          <Save />
          <svg width="10" height="6" className="mr-[10px] -mt-[5px] ml-[3px]">
            <path d="M0 0h10L5 6z" />
          </svg>
          <Sync />
          <span className="ml-[5px] w-[66px] pt-[2px] tracking-[-0.6px]">Sync Views</span>
          <Sep className="h-6" />
          <span className="w-[60px] pt-[2px] pl-[2px] tracking-[-0.6px]">Row Offset</span>
          <Spinner width="w-[58px]" state="on" />
          <span className="w-[45px] pt-[2px] pl-px tracking-[-0.6px]">Instance</span>
          <Spinner width="w-[27px]" state="off" />
          <span className="w-[26px] pt-[2px] pl-[2px]">View</span>
          <Spinner width="w-[33px]" state="half" />
        </div>
        <div className="mt-[3px] flex h-[244px] shrink-0">
          <VsInput />
          <VsOutput />
        </div>
        <Preview />
      </div>
    </div>
  );
}

/* ---------- window ---------- */

const menus: [string, string, string][] = [
  ["F", "ile", "w-[30px]"],
  ["W", "indow", "w-[56px]"],
  ["T", "ools", "w-10"],
  ["H", "elp", "w-[38px]"],
];

export default function App() {
  return (
    <div className="flex h-[1015px] w-[1918px] flex-col overflow-hidden bg-[#e1e1e1] font-['Open_Sans','Noto_Sans',sans-serif] text-[12px] leading-4 tracking-[-0.35px] text-black">
      <header className="flex h-[18px] shrink-0 items-start overflow-hidden bg-white">
        <span className="-mt-[2px] ml-[2px]">
          <Logo />
        </span>
        <span className="-mt-px ml-[6px] tracking-[-0.45px]">COMP220-worksheetA_2019.01.06_15.11.22_frame570.rdc - RenderDoc v1.1</span>
        <svg width="102" height="11" className="mr-[17px] ml-auto" fill="none" stroke="#000">
          <path d="M0 5.500h10" />
          <path d="M45.500 3.500h7v7h-7zM47.500 3.500v-3h7v7h-2" />
          <path d="M91 0l10 10M101 0L91 10" />
        </svg>
      </header>
      <nav className="flex h-[25px] shrink-0 items-center border-b border-black pt-[6px] pl-[9px]">
        {menus.map(([key, rest, width]) => (
          <span key={key} className={width}>
            <span className="underline underline-offset-2">{key}</span>
            {rest}
          </span>
        ))}
        <span className="-mt-[3px] mr-[5px]">
          <Refresh />
        </span>
        <span>Update Available!</span>
      </nav>
      <Timeline />
      <main className="mt-[5px] flex h-[845px] shrink-0">
        <div className="flex w-[642px] shrink-0 flex-col">
          <EventBrowser />
          <ApiInspector />
        </div>
        <Workspace />
      </main>
      <footer className="flex flex-1 items-end pl-3">
        <div className="h-[2px] w-[7px] rounded-t bg-[#9a9a9a]" />
        <div className="ml-[148px] h-px w-[2px] bg-[#6a7a20]" />
      </footer>
    </div>
  );
}
